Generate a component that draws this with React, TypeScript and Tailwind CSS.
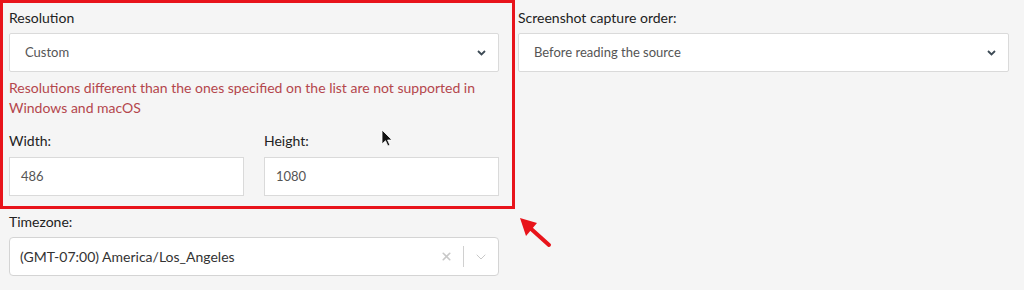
import { X, ChevronDown } from 'lucide-react';

function Chevron() {
  return (
    <svg width="9" height="6" viewBox="0 0 9 6" className="absolute right-[5px] top-1/2 -translate-y-1/2">
      <path d="M1 1l3.5 3.5L8 1" fill="none" stroke="#3d4a55" strokeWidth="1.8" />
    </svg>
  );
}

function FakeSelect({ value }: { value: string }) {
  return (
    <div className="relative h-[39px] border border-[#dadada] bg-white rounded-[2px] flex items-center pl-[15px] text-[13px] text-[#555]">
      {value}
      <div className="absolute right-[7px] top-0 h-full w-[14px]">
        <Chevron />
      </div>
    </div>
  );
}

function TextInput({ value }: { value: string }) {
  return (
    <div className="h-[39px] border border-[#dadada] bg-white flex items-center pl-[11px] text-[13px] text-[#555]">
      {value}
    </div>
  );
}

export default function App() {
  return (
    <div className="relative w-[1024px] h-[290px] bg-[#f5f5f5] font-['Lato',sans-serif] text-[14px] text-[#222] overflow-hidden">
      <div className="flex">
        <div className="w-[515px]">
          {/* highlighted resolution block */}
          <div className="border-[3px] border-[#e8141b] pl-[6px] pr-[13px] pt-[5px] pb-[10px]">
            <div className="leading-[20px] mb-[5px]">Resolution</div>
            <FakeSelect value="Custom" />
            <p className="mt-[6px] leading-[20px] text-[#b4464c]">
              Resolutions different than the ones specified on the list are not supported in Windows and macOS
            </p>
            <div className="mt-[13px] grid grid-cols-2 gap-[20px]">
              <div>
                <div className="leading-[20px] mb-[6px]">Width:</div>
                <TextInput value="486" />
              </div>
              <div>
                <div className="leading-[20px] mb-[6px]">Height:</div>
                <TextInput value="1080" />
              </div>
            </div>
          </div>
          <div className="pl-[9px] pr-[16px] pt-[3px]">
            <div className="leading-[20px] mb-[5px]">Timezone:</div>
            <div className="h-[39px] border border-[#d4d4d4] bg-white rounded-[4px] flex items-center pl-[10px] text-[#333]">
              <span className="flex-1">(GMT-07:00) America/Los_Angeles</span>
              <X size={13} strokeWidth={3} className="text-[#c8c8c8] mr-[10px]" />
              <div className="w-px h-[21px] bg-[#d0d0d0]" />
              <ChevronDown size={16} strokeWidth={1.5} className="text-[#c8c8c8] mx-[9px]" />
            </div>
          </div>
        </div>
        <div className="ml-[3px] w-[491px] pt-[8px]">
          <div className="leading-[20px] mb-[5px]">Screenshot capture order:</div>
          <FakeSelect value="Before reading the source" />
        </div>
      </div>

      {/* annotation arrow */}
      <svg className="absolute left-[514px] top-[212px]" width="42" height="40" viewBox="0 0 42 40">
        <path d="M35 33L15 15" stroke="#e8141b" strokeWidth="4" strokeLinecap="round" />
        <path d="M6 6L23 11L12 24Z" fill="#e8141b" />
      </svg>

      {/* mouse cursor */}
      <svg className="absolute left-[381px] top-[129px]" width="12" height="19" viewBox="0 0 12 19">
        <path d="M1 1v14l3.5-3.3 2.4 5.3 2-0.9-2.3-5.1H11z" fill="#111" stroke="#fff" strokeWidth="0.8" />
      </svg>
    </div>
  );
}
